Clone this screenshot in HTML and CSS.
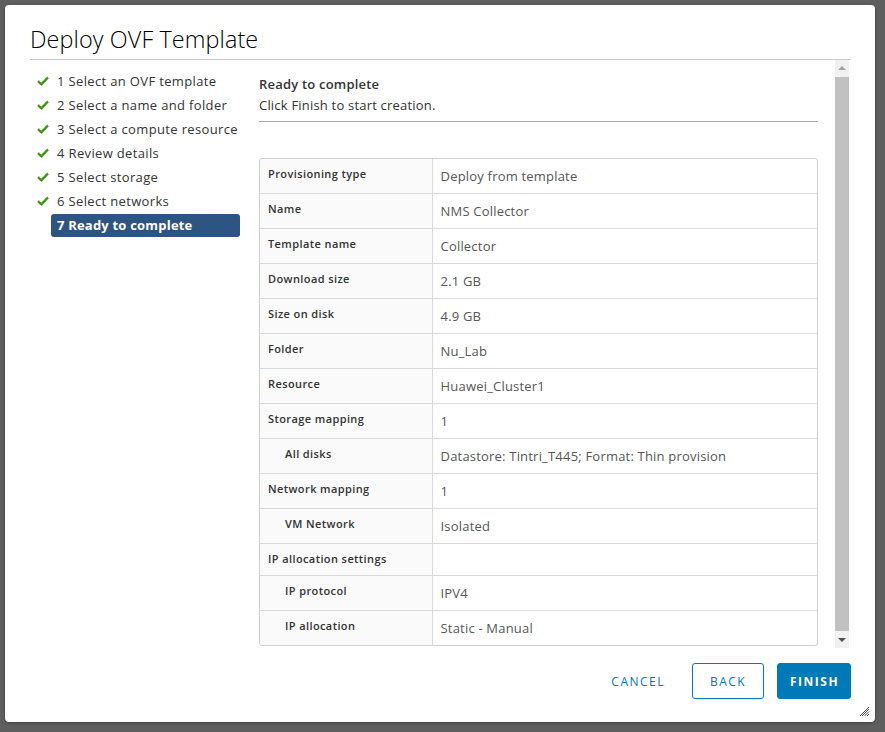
FILE: index.html
```html
<!DOCTYPE html>
<html lang="en">
<head>
<meta charset="utf-8">
<title>Deploy OVF Template</title>
<link rel="stylesheet" href="styles.css">
</head>
<body>
<div class="backdrop">
  <div class="modal">
    <div class="modal-header">
      <h1 class="modal-title">Deploy OVF Template</h1>
    </div>
    <div class="modal-body">
      <nav class="steps">
        <div class="step done"><svg class="check" viewBox="0 0 12 10" width="12" height="10"><path d="M1 5.2 L4.4 8.4 L11 1.4" fill="none" stroke="#3c9a12" stroke-width="2.3"/></svg><span class="step-label">1 Select an OVF template</span></div>
        <div class="step done"><svg class="check" viewBox="0 0 12 10" width="12" height="10"><path d="M1 5.2 L4.4 8.4 L11 1.4" fill="none" stroke="#3c9a12" stroke-width="2.3"/></svg><span class="step-label">2 Select a name and folder</span></div>
        <div class="step done"><svg class="check" viewBox="0 0 12 10" width="12" height="10"><path d="M1 5.2 L4.4 8.4 L11 1.4" fill="none" stroke="#3c9a12" stroke-width="2.3"/></svg><span class="step-label">3 Select a compute resource</span></div>
        <div class="step done"><svg class="check" viewBox="0 0 12 10" width="12" height="10"><path d="M1 5.2 L4.4 8.4 L11 1.4" fill="none" stroke="#3c9a12" stroke-width="2.3"/></svg><span class="step-label">4 Review details</span></div>
        <div class="step done"><svg class="check" viewBox="0 0 12 10" width="12" height="10"><path d="M1 5.2 L4.4 8.4 L11 1.4" fill="none" stroke="#3c9a12" stroke-width="2.3"/></svg><span class="step-label">5 Select storage</span></div>
        <div class="step done"><svg class="check" viewBox="0 0 12 10" width="12" height="10"><path d="M1 5.2 L4.4 8.4 L11 1.4" fill="none" stroke="#3c9a12" stroke-width="2.3"/></svg><span class="step-label">6 Select networks</span></div>
        <div class="step current"><span class="check-space"></span><span class="step-label">7 Ready to complete</span></div>
      </nav>
      <div class="pane">
        <div class="content">
          <div class="content-title">Ready to complete</div>
          <div class="content-sub">Click Finish to start creation.</div>
          <div class="rule"></div>
          <div class="summary">
            <table class="summary-table">
              <tr><td class="k">Provisioning type</td><td class="v">Deploy from template</td></tr>
              <tr><td class="k">Name</td><td class="v">NMS Collector</td></tr>
              <tr><td class="k">Template name</td><td class="v">Collector</td></tr>
              <tr><td class="k">Download size</td><td class="v">2.1 GB</td></tr>
              <tr><td class="k">Size on disk</td><td class="v">4.9 GB</td></tr>
              <tr><td class="k">Folder</td><td class="v">Nu_Lab</td></tr>
              <tr><td class="k">Resource</td><td class="v">Huawei_Cluster1</td></tr>
              <tr><td class="k">Storage mapping</td><td class="v">1</td></tr>
              <tr><td class="k sub">All disks</td><td class="v">Datastore: Tintri_T445; Format: Thin provision</td></tr>
              <tr><td class="k">Network mapping</td><td class="v">1</td></tr>
              <tr><td class="k sub">VM Network</td><td class="v">Isolated</td></tr>
              <tr><td class="k">IP allocation settings</td><td class="v"></td></tr>
              <tr><td class="k sub">IP protocol</td><td class="v">IPV4</td></tr>
              <tr><td class="k sub">IP allocation</td><td class="v">Static - Manual</td></tr>
            </table>
          </div>
        </div>
        <div class="scrollbar">
          <div class="arrow up"></div>
          <div class="thumb"></div>
          <div class="arrow down"></div>
        </div>
      </div>
    </div>
    <div class="modal-footer">
      <button class="btn btn-flat">CANCEL</button>
      <button class="btn btn-outline">BACK</button>
      <button class="btn btn-primary">FINISH</button>
    </div>
    <svg class="resize" viewBox="0 0 10 10" width="10" height="10"><path d="M9 2 L2 9 M9 4.5 L4.5 9 M9 7 L7 9 M9 0 L0 9" stroke="#444" stroke-width="1" fill="none"/></svg>
  </div>
</div>
</body>
</html>
```

FILE: styles.css
```css
* { box-sizing: border-box; }
html, body { margin: 0; padding: 0; }
body {
  width: 885px;
  height: 732px;
  overflow: hidden;
  background: #5e5e5e;
  font-family: "Open Sans", "Liberation Sans", sans-serif;
}
.backdrop {
  padding: 5px 10px 10px 5px;
}
.modal {
  position: relative;
  width: 870px;
  height: 717px;
  background: #fff;
  border-radius: 4px;
  box-shadow: 0 1px 3px rgba(0,0,0,0.35);
  display: flex;
  flex-direction: column;
}
.modal-header {
  margin: 0 24px 0 25px;
  height: 55px;
  border-bottom: 1px solid #c7c7c7;
  display: flex;
  align-items: flex-end;
}
.modal-title {
  margin: 0 0 5px 0;
  font-size: 23.4px;
  line-height: 30px;
  font-weight: 300;
  color: #000;
  letter-spacing: 0.1px;
}
.modal-body {
  height: 588px;
  display: flex;
  padding: 0 26px 0 25px;
}
.steps {
  width: 229px;
  padding-top: 9px;
  flex-shrink: 0;
}
.step {
  height: 24px;
  display: flex;
  align-items: center;
}
.check, .check-space {
  width: 12px;
  margin: 0 2px 0 7px;
  flex-shrink: 0;
}
.step-label {
  font-size: 13px;
  color: #333;
  font-weight: 500;
  padding: 0 6px;
  line-height: 23px;
  letter-spacing: 0.35px;
  white-space: nowrap;
}
.step.current .step-label {
  background: #2e5484;
  color: #fff;
  font-weight: 700;
  border-radius: 3px;
  width: 189px;
  letter-spacing: 0.2px;
}
.pane {
  flex: 1;
  display: flex;
  gap: 17px;
}
.content {
  flex: 1;
  padding-top: 14px;
}
.content-title {
  font-size: 13px;
  line-height: 20px;
  font-weight: 600;
  color: #333;
  letter-spacing: 0.2px;
}
.content-sub {
  font-size: 13px;
  line-height: 20px;
  color: #333;
  letter-spacing: 0.2px;
  margin-top: 1px;
}
.rule {
  margin-top: 6px;
  height: 1px;
  background: #a8a8a8;
}
.summary {
  margin-top: 36px;
  border: 1px solid #cfcfcf;
  border-radius: 3px;
  overflow: hidden;
}
.summary-table {
  width: 100%;
  border-collapse: collapse;
  table-layout: fixed;
}
.summary-table td {
  padding: 9px 8px;
  vertical-align: top;
  border-bottom: 1px solid #d9d9d9;
}
.summary-table tr:last-child td { border-bottom: none; }
.summary-table .k {
  width: 172px;
  background: #fafafa;
  border-right: 1px solid #d9d9d9;
  font-size: 11px;
  line-height: 13px;
  padding-top: 8px;
  padding-bottom: 10px;
  font-weight: 600;
  color: #333;
  letter-spacing: 0.4px;
}
.summary-table .k.sub { padding-left: 25px; }
.summary-table .v {
  font-size: 13px;
  line-height: 16px;
  color: #565656;
  letter-spacing: 0.2px;
}
.scrollbar {
  width: 14px;
  height: 588px;
  background: #f1f1f1;
  display: flex;
  flex-direction: column;
  align-items: center;
}
.arrow {
  width: 0;
  height: 0;
  border-left: 4px solid transparent;
  border-right: 4px solid transparent;
  margin: 6px 0;
}
.arrow.up { border-bottom: 4px solid #a3a3a3; }
.arrow.down { border-top: 4px solid #505050; }
.thumb {
  width: 14px;
  flex: 1;
  background: #c1c1c1;
  margin: 1px 0;
}
.modal-footer {
  flex: 1;
  display: flex;
  justify-content: flex-end;
  align-items: flex-start;
  padding: 15px 24px 0 0;
  gap: 13px;
}
.btn {
  height: 36px;
  font-family: "Open Sans", "Liberation Sans", sans-serif;
  font-size: 12px;
  font-weight: 600;
  letter-spacing: 1.5px;
  border-radius: 3px;
  padding: 0 12px;
  cursor: pointer;
}
.btn-flat {
  background: transparent;
  border: 1px solid transparent;
  color: #0079b8;
  font-weight: 500;
  margin-right: 1px;
}
.btn-outline {
  background: #fff;
  border: 1px solid #0079b8;
  color: #0079b8;
  font-weight: 500;
  width: 72px;
}
.btn-primary {
  background: #0079b8;
  border: 1px solid #0079b8;
  color: #fff;
  font-weight: 700;
  width: 74px;
}
.resize {
  position: absolute;
  right: 5px;
  bottom: 5px;
}
```
